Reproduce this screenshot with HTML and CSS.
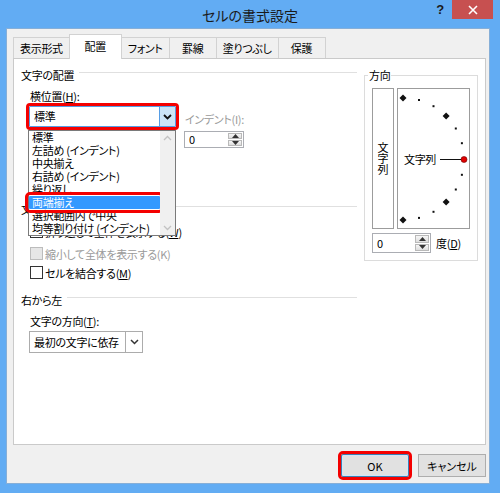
FILE: index.html
```html
<!DOCTYPE html>
<html lang="ja">
<head>
    <meta charset="UTF-8">
    <title>セルの書式設定</title>
    <link rel="stylesheet" href="styles.css">
</head>
<body>
    <div class="window">
        <div class="titlebar">
            <div></div>
            <div class="title">セルの書式設定</div>
            <div class="caption-buttons">
                <span class="help">?</span>
                <span class="close">
                    <svg width="10" height="10" viewBox="0 0 10 10"><path d="M1 1L9 9M9 1L1 9" stroke="#fff" stroke-width="1.6"/></svg>
                </span>
            </div>
        </div>

        <div class="dialog">
            <div class="tabs">
                <div class="tab">表示形式</div>
                <div class="tab active">配置</div>
                <div class="tab">フォント</div>
                <div class="tab">罫線</div>
                <div class="tab">塗りつぶし</div>
                <div class="tab">保護</div>
            </div>

            <div class="panel">
                <div class="col-left">
                    <div class="group-head">文字の配置</div>
                    <div class="field-label">横位置(<u>H</u>):</div>
                    <div class="align-row">
                        <div class="combo">
                            <div class="select open">
                                <span class="select-text">標準</span>
                                <span class="drop-btn">
                                    <svg width="9" height="6" viewBox="0 0 9 6"><path d="M1 1L4.5 4.5L8 1" fill="none" stroke="#111" stroke-width="1.8"/></svg>
                                </span>
                            </div>
                            <!-- open list of the combo -->
                            <div class="dropdown">
                                <ul class="options">
                                    <li>標準</li>
                                    <li>左詰め (インデント)</li>
                                    <li>中央揃え</li>
                                    <li>右詰め (インデント)</li>
                                    <li>繰り返し</li>
                                    <li class="picked">両端揃え</li>
                                    <li>選択範囲内で中央</li>
                                    <li>均等割り付け (インデント)</li>
                                </ul>
                                <div class="scrollbar">
                                    <svg width="9" height="6" viewBox="0 0 9 6"><path d="M1 5L4.5 1.5L8 5" fill="none" stroke="#c2c2c2" stroke-width="1.3"/></svg>
                                    <svg width="9" height="6" viewBox="0 0 9 6"><path d="M1 1L4.5 4.5L8 1" fill="none" stroke="#c2c2c2" stroke-width="1.3"/></svg>
                                </div>
                            </div>
                        </div>
                        <div class="indent">
                            <div class="field-label dim">インデント(I):</div>
                            <div class="spin indent-spin">
                                <span class="spin-value">0</span>
                                <span class="spin-btns">
                                    <span><svg width="7" height="4" viewBox="0 0 7 4"><path d="M0 4L3.5 0L7 4Z" fill="#333"/></svg></span>
                                    <span><svg width="7" height="4" viewBox="0 0 7 4"><path d="M0 0L3.5 4L7 0Z" fill="#333"/></svg></span>
                                </span>
                            </div>
                        </div>
                    </div>

                    <div class="group-head control-head">文字の制御</div>
                    <div class="check first"><span class="box"></span>折り返して全体を表示する(<u>W</u>)</div>
                    <div class="check disabled"><span class="box"></span>縮小して全体を表示する(K)</div>
                    <div class="check"><span class="box"></span>セルを結合する(<u>M</u>)</div>

                    <div class="group-head rtl-head">右から左</div>
                    <div class="field-label">文字の方向(<u>T</u>):</div>
                    <div class="select plain">
                        <span class="select-text">最初の文字に依存</span>
                        <span class="drop-btn">
                            <svg width="9" height="6" viewBox="0 0 9 6"><path d="M1 1L4.5 4.5L8 1" fill="none" stroke="#333" stroke-width="1.5"/></svg>
                        </span>
                    </div>
                </div>

                <fieldset class="direction">
                    <legend>方向</legend>
                    <div class="orient">
                        <div class="vbox">文字列</div>
                        <div class="arcbox">
                            <svg width="71" height="139" viewBox="0 0 71 139">
                                <g fill="#111">
                                    <path d="M5 5.5L8.5 9L5 12.5L1.5 9Z"/>
                                    <rect x="20" y="10" width="2" height="2"/>
                                    <rect x="34.5" y="16.2" width="2" height="2"/>
                                    <path d="M48.1 23.4L51.6 26.9L48.1 30.4L44.6 26.9Z"/>
                                    <rect x="56.8" y="38.5" width="2" height="2"/>
                                    <rect x="62.9" y="53.2" width="2" height="2"/>
                                    <rect x="62.9" y="84.8" width="2" height="2"/>
                                    <rect x="56.8" y="99.5" width="2" height="2"/>
                                    <path d="M48.1 109.6L51.6 113.1L48.1 116.6L44.6 113.1Z"/>
                                    <rect x="34.5" y="121.8" width="2" height="2"/>
                                    <rect x="20" y="127.9" width="2" height="2"/>
                                    <path d="M5 127.5L8.5 131L5 134.5L1.5 131Z"/>
                                </g>
                                <text x="22" y="74.5" text-anchor="middle" class="arc-text">文字列</text>
                                <path d="M42 70.5H64" stroke="#111" stroke-width="1"/>
                                <circle cx="66" cy="70.5" r="3" fill="#e00000" stroke="#6a0000" stroke-width="0.6"/>
                            </svg>
                        </div>
                    </div>
                    <div class="degree-row">
                        <div class="spin degree-spin">
                            <span class="spin-value">0</span>
                            <span class="spin-btns">
                                <span><svg width="7" height="4" viewBox="0 0 7 4"><path d="M0 4L3.5 0L7 4Z" fill="#333"/></svg></span>
                                <span><svg width="7" height="4" viewBox="0 0 7 4"><path d="M0 0L3.5 4L7 0Z" fill="#333"/></svg></span>
                            </span>
                        </div>
                        <span class="degree-label">度(<u>D</u>)</span>
                    </div>
                </fieldset>
            </div>

            <div class="buttons">
                <button class="btn ok">OK</button>
                <button class="btn">キャンセル</button>
            </div>
        </div>
    </div>
</body>
</html>
```

FILE: styles.css
```css
* {
    box-sizing: border-box;
    margin: 0;
    padding: 0;
}
body {
    font-family: "Noto Sans CJK JP", "Noto Sans", sans-serif;
    font-size: 11px;
    letter-spacing: -0.3px;
    color: #000;
    font-feature-settings: "palt";
    background: #fff;
}
u {
    text-decoration: underline;
    text-underline-offset: 1px;
}

/* window frame */
.window {
    width: 500px;
    height: 493px;
    background: #62acf3;
    display: flex;
    flex-direction: column;
}
.titlebar {
    height: 28px;
    display: grid;
    grid-template-columns: 1fr auto 1fr;
}
.title {
    font-size: 14px;
    letter-spacing: 0;
    line-height: 30px;
    color: #1a1a1a;
}
.caption-buttons {
    display: flex;
    justify-content: flex-end;
    align-items: flex-start;
    padding-right: 7px;
}
.help {
    width: 24px;
    text-align: center;
    font: bold 13px/20px "Liberation Sans", sans-serif;
    color: #1a1a1a;
}
.close {
    width: 41px;
    height: 19px;
    background: #c75050;
    display: flex;
    align-items: center;
    justify-content: center;
}

.dialog {
    flex: 1;
    margin: 0 10px 9px 6px;
    background: #f0f0f0;
    border: 1px solid #86afd8;
    padding: 5px 3px 0 6px;
}

/* tabs */
.tabs {
    display: flex;
    align-items: flex-end;
    height: 24px;
}
.tab {
    height: 21px;
    min-width: 48px;
    padding: 0 6px;
    line-height: 20px;
    text-align: center;
    background: #f0f0f0;
    border: 1px solid #d2d2d2;
    border-bottom: none;
    margin-right: -1px;
}
.tab.active {
    height: 25px;
    min-width: 53px;
    line-height: 23px;
    background: #fff;
    margin-bottom: -1px;
    position: relative;
    z-index: 1;
}

.panel {
    width: 473px;
    height: 387px;
    background: #fff;
    border: 1px solid #cacaca;
    padding: 7px 7px 0 7px;
    display: flex;
    gap: 7px;
}

/* left column */
.col-left {
    width: 337px;
}
.group-head {
    display: flex;
    align-items: center;
    height: 18px;
    line-height: 18px;
}
.group-head::after {
    content: '';
    flex: 1;
    border-top: 1px solid #e0e0e0;
    margin: 0 0 6px 5px;
}
.field-label {
    margin: 5px 0 0 9px;
    line-height: 14px;
}
.field-label.dim {
    color: #9a9a9a;
    margin: 6px 0 0 1px;
}
.align-row {
    display: flex;
    margin: 3px 0 0 8px;
    height: 42px;
}
.combo {
    position: relative;
    width: 147px;
}
.select {
    display: flex;
    height: 21px;
    background: #fff;
}
.select-text {
    flex: 1;
    padding-left: 4px;
    line-height: 19px;
    white-space: nowrap;
}
.drop-btn {
    width: 16px;
    display: flex;
    align-items: center;
    justify-content: center;
}
.select.open {
    border: 1px solid #569de5;
    outline: 3px solid #f40000;
    border-radius: 1px;
}
.select.open .drop-btn {
    background: #cce4f7;
    border-left: 1px solid #569de5;
}
.select.plain {
    width: 114px;
    height: 22px;
    margin: 3px 0 0 8px;
    border: 1px solid #acacac;
}
.select.plain .select-text {
    line-height: 20px;
}
.select.plain .drop-btn {
    width: 17px;
    border-left: 1px solid #acacac;
}

/* open list */
.dropdown {
    position: absolute;
    top: 24px;
    left: -1px;
    width: 148px;
    height: 106px;
    background: #fff;
    border: 1px solid #7a7a7a;
    display: flex;
    z-index: 2;
}
.options {
    flex: 1;
    list-style: none;
}
.options li {
    height: 13px;
    line-height: 13px;
    padding-left: 3px;
    white-space: nowrap;
}
.options li.picked {
    background: #3399ff;
    color: #fff;
    outline: 3px solid #f40000;
    outline-offset: 1px;
    border-radius: 1px;
}
.scrollbar {
    width: 15px;
    background: #f0f0f0;
    display: flex;
    flex-direction: column;
    justify-content: space-between;
    align-items: center;
    padding: 4px 0;
}

.indent {
    margin-left: 8px;
}
.spin {
    display: flex;
    background: #fff;
    border: 1px solid #abadb3;
}
.spin-value {
    flex: 1;
    padding-left: 4px;
}
.spin-btns {
    width: 14px;
    display: flex;
    flex-direction: column;
    margin: 1px;
    gap: 1px;
}
.spin-btns span {
    flex: 1;
    display: flex;
    align-items: center;
    justify-content: center;
    background: linear-gradient(#f6f6f6, #dedede);
    border: 1px solid #b9b9b9;
}
.indent-spin {
    width: 60px;
    height: 17px;
    margin-top: 5px;
}
.indent-spin .spin-value {
    line-height: 15px;
}

.control-head {
    margin-top: 52px;
}
.check {
    display: flex;
    align-items: center;
    height: 19px;
    margin-left: 9px;
    white-space: nowrap;
}
.check .box {
    width: 13px;
    height: 13px;
    border: 1px solid #333;
    background: #fff;
    margin-right: 2px;
}
.check.first {
    margin-top: 4px;
}
.check.disabled {
    margin-top: 3px;
    color: #9a9a9a;
}
.check.disabled .box {
    border-color: #bcbcbc;
    background: #e6e6e6;
}
.rtl-head {
    margin-top: 9px;
}

/* orientation box */
.direction {
    width: 114px;
    height: 195px;
    border: 1px solid #dcdcdc;
    padding: 4px 7px 6px 7px;
}
.direction legend {
    margin-left: -4px;
    padding: 0 1px;
    line-height: 18px;
}
.orient {
    display: flex;
    gap: 3px;
    height: 141px;
}
.vbox {
    width: 22px;
    border: 1px solid #9c9c9c;
    writing-mode: vertical-rl;
    text-orientation: upright;
    letter-spacing: 0;
    display: flex;
    align-items: center;
    justify-content: center;
    line-height: 20px;
}
.arcbox {
    width: 73px;
    border: 1px solid #9c9c9c;
}
.arcbox svg {
    display: block;
}
.arc-text {
    font-family: "Noto Sans CJK JP", sans-serif;
    font-size: 11px;
}
.degree-row {
    display: flex;
    align-items: center;
    margin-top: 4px;
}
.degree-spin {
    width: 59px;
    height: 20px;
}
.degree-spin .spin-value {
    line-height: 18px;
}
.degree-label {
    margin-left: 5px;
}

/* dialog buttons */
.buttons {
    display: flex;
    justify-content: flex-end;
    gap: 9px;
    margin-top: 9px;
}
.btn {
    width: 68px;
    height: 23px;
    font-family: inherit;
    font-size: 11px;
    font-feature-settings: "palt";
    background: #e1e1e1;
    border: 1px solid #adadad;
    color: #000;
}
.btn.ok {
    border-color: #3c7fb1;
    box-shadow: inset 0 0 0 1px #cfe6fa;
    outline: 3px solid #f40000;
    border-radius: 2px;
}
```
